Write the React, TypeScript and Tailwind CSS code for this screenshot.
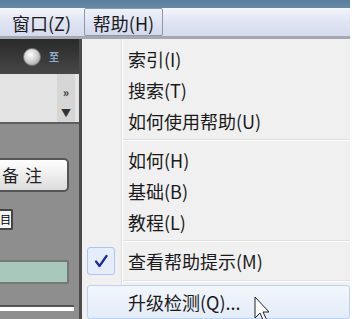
import React from "react";

const font = { fontFamily: '"Noto Sans CJK SC", "Noto Sans", sans-serif' };

function Item({ label }: { label: string }) {
  return (
    <div className="flex h-[31px] items-center pl-[46px] text-[18px] leading-none text-[#1a1a1a]">
      {label}
    </div>
  );
}

function Sep({ h }: { h: string }) {
  return (
    <div className={`flex items-center pl-[41px] ${h}`}>
      <div className="flex-1 border-t border-[#e0e0e0] border-b border-b-white" />
    </div>
  );
}

export default function App() {
  return (
    <div className="relative flex h-[319px] w-[360px] overflow-hidden bg-white" style={font}>
      <div className="flex w-[350px] flex-col">
        <div className="h-[14px] bg-gradient-to-b from-[#5a7f9e] to-[#6689a6]" />
        <div className="flex h-[31px] items-stretch border-b-[3px] border-[#a4a8b0] bg-gradient-to-b from-[#f4f6fb] via-[#dfe4f3] to-[#d5dcef] text-[18px] text-[#1a1a1a]">
          <div className="flex w-[84px] items-center pl-[12px] pt-[2px]">窗口(Z)</div>
          <div className="flex w-[79px] items-center justify-center rounded-[2px] border border-[#8d98a8] bg-gradient-to-b from-[#eef1f8] to-[#d2d9ec] pt-[2px]">
            帮助(H)
          </div>
        </div>
        <div className="flex flex-1">
          <div className="flex w-[82px] flex-col border-r-[3px] border-[#4b4b4b] bg-[#8e8e8e]">
            <div className="flex h-[35px] items-center gap-[8px] bg-gradient-to-b from-[#2a2a2a] to-[#474747] pl-[23px]">
              <div className="h-[18px] w-[18px] rounded-full border border-[#777] bg-[radial-gradient(circle_at_40%_35%,#ffffff,#c8c8c8_55%,#8a8a8a)]" />
              <span className="text-[10px] font-bold leading-none text-[#8fb0d0]">至</span>
            </div>
            <div className="flex h-[50px] border-b-[2px] border-[#5e5e5e] bg-[#e4e4e4]">
              <div className="flex-1" />
              <div className="mr-[4px] flex w-[18px] flex-col items-center justify-between bg-[#d6d6d6] pb-[4px] pt-[12px] text-[12px] leading-none text-[#333]">
                <span className="font-bold">»</span>
                <span className="text-[10px]">▼</span>
              </div>
            </div>
            <div className="flex flex-1 flex-col pt-[34px]">
              <div className="flex h-[34px] w-[69px] items-center rounded-r-[5px] border-2 border-l-0 border-[#555] bg-gradient-to-b from-[#ffffff] to-[#dcdcdc] pl-[2px] text-[17px] tracking-[6px] text-[#222]">
                备注
              </div>
              <div className="mt-[17px] flex h-[21px] w-[13px] items-center justify-center rounded-r-[2px] border-2 border-l-0 border-[#444] bg-[#f4f4f4] text-[11px] leading-none">
                目
              </div>
              <div className="mt-[30px] h-[24px] w-[69px] border-2 border-l-0 border-[#777] bg-[#a8c8bc]" />
              <div className="mt-[21px] h-[6px] w-[74px] border-t-2 border-[#555] bg-white" />
            </div>
          </div>
          <div className="relative flex flex-1 flex-col bg-[#f0f0f0] pt-[4px]">
            <div className="absolute bottom-0 left-[39px] top-0 w-[2px] border-l border-[#e0e0e0] bg-white" />
            <div className="relative">
              <Item label="索引(I)" />
              <Item label="搜索(T)" />
              <Item label="如何使用帮助(U)" />
              <Sep h="h-[8px]" />
              <Item label="如何(H)" />
              <Item label="基础(B)" />
              <Item label="教程(L)" />
              <Sep h="h-[7px]" />
              <div className="flex h-[34px] items-center">
                <div className="ml-[5px] flex h-[28px] w-[28px] items-center justify-center rounded-[3px] border border-[#aac8ee] bg-[#e4edf9]">
                  <svg width="14" height="14" viewBox="0 0 14 14">
                    <path d="M2 7.5 L5.5 12 L12.5 2" fill="none" stroke="#1c2a9e" strokeWidth="2.2" strokeLinecap="round" strokeLinejoin="round" />
                  </svg>
                </div>
                <span className="pl-[13px] text-[18px] leading-none text-[#1a1a1a]">查看帮助提示(M)</span>
              </div>
              <Sep h="h-[5px]" />
              <div className="ml-[5px] mt-[2px] flex h-[34px] items-center rounded-[3px] border border-[#bcd3ef] bg-gradient-to-b from-[#f2f6fc] to-[#e3ecf8] pl-[40px] text-[18px] leading-none text-[#1a1a1a]">
                升级检测(Q)...
              </div>
            </div>
          </div>
        </div>
      </div>
      <svg className="absolute left-[254px] top-[296px]" width="16" height="26" viewBox="0 0 16 26">
        <path d="M1 1 L1 22 L6 17 L9.5 25 L12.5 23.5 L9 16 L15 16 Z" fill="white" stroke="#222" strokeWidth="1" />
      </svg>
    </div>
  );
}
